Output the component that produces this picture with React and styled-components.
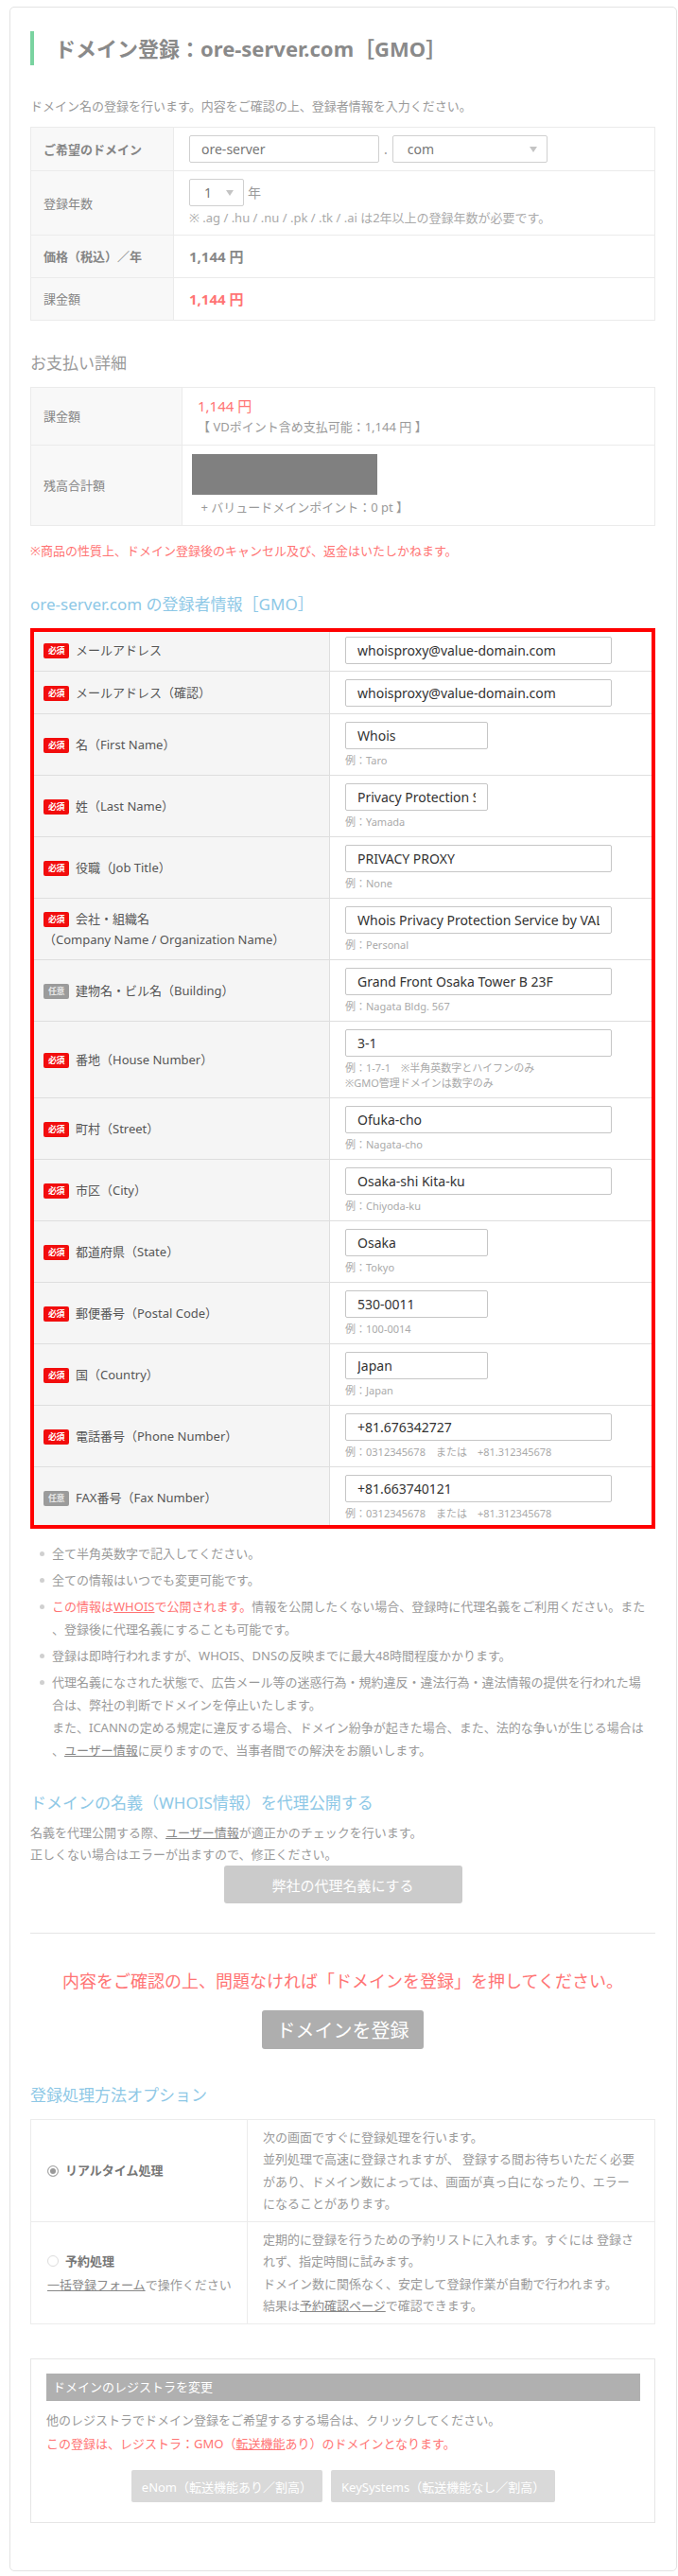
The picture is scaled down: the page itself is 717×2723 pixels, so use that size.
import React from 'react';
import styled, { createGlobalStyle } from 'styled-components';

const GlobalStyle = createGlobalStyle`
  html, body {
    margin: 0;
    padding: 0;
    background: #fff;
  }
  body {
    font-family: "Noto Sans", "Noto Sans CJK JP", sans-serif;
    font-size: 13px;
    line-height: 20px;
    color: #9a9a9a;
  }
  * {
    box-sizing: border-box;
  }
`;

const Card = styled.div`
  margin: 7px 1px 17px 10px;
  padding: 25px 22px 50px 21px;
  border: 1px solid #e3e3e3;
  border-radius: 5px;
  background: #fff;
`;

const Title = styled.h1`
  margin: 0;
  height: 36px;
  display: flex;
  align-items: center;
  padding-left: 22px;
  border-left: 4px solid #7ad3a0;
  font-size: 22px;
  font-weight: bold;
  color: #8a8a8a;
`;

const Intro = styled.p`
  margin: 33px 0 12px;
  line-height: 20px;
`;

const InfoTable = styled.table`
  width: 100%;
  border-collapse: collapse;
  border: 1px solid #ebebeb;
`;

const InfoLabel = styled.th`
  width: ${p => p.$w}px;
  padding: 0 13px;
  border: 1px solid #ebebeb;
  background: #f8f8f8;
  text-align: left;
  vertical-align: middle;
  font-weight: ${p => (p.$bold ? 'bold' : 'normal')};
  color: #858585;
`;

const InfoCell = styled.td`
  padding: ${p => p.$pad || '8px 16px'};
  border: 1px solid #ebebeb;
  vertical-align: middle;
`;

const InlineRow = styled.div`
  display: flex;
  align-items: center;
  gap: ${p => p.$gap || 5}px;
`;

const TextInput = styled.input`
  display: block;
  width: ${p => p.$w}px;
  height: 29px;
  padding: 0 12px;
  border: 1px solid #d0d0d0;
  border-radius: 2px;
  font-family: "Noto Sans", "Noto Sans CJK JP", sans-serif;
  font-size: 14px;
  color: #777;
  background: #fff;
  outline: none;
`;

const SelectBox = styled.div`
  width: ${p => p.$w}px;
  height: 29px;
  display: flex;
  align-items: center;
  justify-content: space-between;
  padding: 0 10px 0 15px;
  border: 1px solid #d0d0d0;
  border-radius: 2px;
  font-size: 14px;
  color: #777;
  background: #fff;
`;

const Caret = styled.span`
  width: 0;
  height: 0;
  border-left: 4px solid transparent;
  border-right: 4px solid transparent;
  border-top: 6px solid #c4c4c4;
`;

const Sep = styled.span`
  color: #999;
  font-size: 14px;
`;

const Note = styled.div`
  margin-top: 3px;
  line-height: 18px;
  color: #aaa;
`;

const Price = styled.div`
  font-size: 15px;
  line-height: ${p => p.$lh || 20}px;
  font-weight: ${p => (p.$bold ? 'bold' : 'normal')};
  color: ${p => (p.$red ? '#ff7474' : '#888')};
`;

const Line = styled.div`
  line-height: 22px;
  margin-top: ${p => p.$mt || 0}px;
`;

const Redacted = styled.div`
  width: 196px;
  height: 43px;
  margin-left: -6px;
  background: #808080;
`;

const SectionTitle = styled.h2`
  margin: ${p => p.$mt}px 0 ${p => p.$mb}px;
  font-size: 17px;
  font-weight: normal;
  line-height: 24px;
  color: ${p => (p.$blue ? '#8ec8e6' : '#9a9a9a')};
`;

const Warn = styled.p`
  margin: 16px 0 0;
  line-height: 20px;
  color: #ff7474;
`;

const FormFrame = styled.div`
  position: relative;
  &::after {
    content: '';
    position: absolute;
    inset: 0;
    border: 4px solid #ff0000;
    pointer-events: none;
  }
`;

const FormTable = styled.table`
  width: 100%;
  border-collapse: collapse;
`;

const FormLabel = styled.th`
  width: 316px;
  padding: 6px 8px 6px 13px;
  border: 1px solid #dedede;
  background: #f5f5f5;
  text-align: left;
  vertical-align: middle;
  font-weight: normal;
  font-size: 13px;
  line-height: 22px;
  color: #555;
`;

const FormCell = styled.td`
  padding: 8px 16px 7px;
  border: 1px solid #dedede;
  background: #fff;
  vertical-align: top;
`;

const Badge = styled.span`
  display: inline-block;
  width: 27px;
  height: 16px;
  margin-right: 7px;
  border-radius: 2px;
  background: ${p => (p.$optional ? '#9b9b9b' : '#f20d0d')};
  color: ${p => (p.$optional ? '#e8e8e8' : '#fff')};
  font-size: 9px;
  font-weight: bold;
  line-height: 16px;
  text-align: center;
  vertical-align: 1px;
  letter-spacing: -0.5px;
`;

const FieldInput = styled.input`
  display: block;
  width: ${p => (p.$short ? 151 : 282)}px;
  height: 29px;
  padding: 0 12px;
  border: 1px solid #c6c6c6;
  border-radius: 2px;
  font-family: "Noto Sans", "Noto Sans CJK JP", sans-serif;
  font-size: 14px;
  color: #333;
  background: #fff;
  outline: none;
`;

const Hints = styled.div`
  margin-top: 4px;
  font-size: 11px;
  line-height: 16px;
  color: #aaa;
`;

const Notes = styled.ul`
  margin: 14px 0 0;
  padding: 0;
  list-style: none;
`;

const NoteItem = styled.li`
  display: flex;
  margin-bottom: 4px;
  line-height: 24px;
`;

const Bullet = styled.span`
  flex: none;
  width: 5px;
  height: 5px;
  margin: 10px 8px 0 10px;
  border-radius: 50%;
  background: #d0d0d0;
`;

const Red = styled.span`
  color: #ff7474;
`;

const Link = styled.span`
  text-decoration: underline;
  color: ${p => (p.$red ? '#ff7474' : '#888')};
`;

const Lead = styled.p`
  margin: 0;
  line-height: 23px;
`;

const Center = styled.div`
  display: flex;
  justify-content: center;
  gap: 9px;
  margin-top: ${p => p.$mt || 0}px;
`;

const Button = styled.button`
  width: ${p => p.$w}px;
  height: ${p => p.$h}px;
  border: none;
  border-radius: 3px;
  background: ${p => p.$bg};
  color: #fff;
  font-family: "Noto Sans", "Noto Sans CJK JP", sans-serif;
  font-size: ${p => p.$fs}px;
  padding: 0;
`;

const Divider = styled.hr`
  margin: 31px 0 0;
  border: none;
  border-top: 1px solid #e5e5e5;
`;

const Confirm = styled.p`
  margin: 37px 0 0;
  text-align: center;
  font-size: 18px;
  line-height: 26px;
  color: #ff7474;
`;

const OptionTable = styled.table`
  width: 100%;
  border-collapse: collapse;
  border: 1px solid #ececec;
`;

const OptionLabel = styled.th`
  width: 229px;
  padding: 0 10px 0 17px;
  border: 1px solid #ececec;
  text-align: left;
  vertical-align: middle;
  font-weight: normal;
  line-height: 25px;
  color: #999;
`;

const OptionText = styled.td`
  padding: 7px 16px;
  border: 1px solid #ececec;
  line-height: 23.3px;
`;

const RadioRow = styled.div`
  display: flex;
  align-items: center;
  gap: 7px;
  font-weight: bold;
  color: #777;
`;

const Radio = styled.span`
  width: 12px;
  height: 12px;
  border-radius: 50%;
  border: 1px solid ${p => (p.$on ? '#aaa' : '#ddd')};
  background: ${p => (p.$on ? '#999' : '#fff')};
  box-shadow: inset 0 0 0 2px #fff;
`;

const RegistrarBox = styled.div`
  margin-top: 36px;
  padding: 15px 15px 21px 16px;
  border: 1px solid #e6e6e6;
`;

const RegistrarHead = styled.div`
  height: 29px;
  padding-left: 7px;
  background: #b0b0b0;
  color: #fff;
  line-height: 29px;
`;

const RegistrarText = styled.div`
  margin-top: 8px;
  line-height: 25px;
`;

const RegistrarButton = styled.button`
  height: 34px;
  padding: 0 11px;
  border: none;
  border-radius: 2px;
  background: #d9d9d9;
  color: #fff;
  font-family: "Noto Sans", "Noto Sans CJK JP", sans-serif;
  font-size: 13px;
`;

const phoneHint = '例：0312345678　または　+81.312345678';

const fields = [
  { label: 'メールアドレス', value: 'whoisproxy@value-domain.com' },
  { label: 'メールアドレス（確認）', value: 'whoisproxy@value-domain.com' },
  { label: '名（First Name）', value: 'Whois', short: true, hints: ['例：Taro'] },
  { label: '姓（Last Name）', value: 'Privacy Protection Service', short: true, hints: ['例：Yamada'] },
  { label: '役職（Job Title）', value: 'PRIVACY PROXY', hints: ['例：None'] },
  {
    label: '会社・組織名',
    sub: '（Company Name / Organization Name）',
    value: 'Whois Privacy Protection Service by VALUE-DOMAIN',
    hints: ['例：Personal'],
  },
  { label: '建物名・ビル名（Building）', optional: true, value: 'Grand Front Osaka Tower B 23F', hints: ['例：Nagata Bldg. 567'] },
  { label: '番地（House Number）', value: '3-1', hints: ['例：1-7-1　※半角英数字とハイフンのみ', '※GMO管理ドメインは数字のみ'] },
  { label: '町村（Street）', value: 'Ofuka-cho', hints: ['例：Nagata-cho'] },
  { label: '市区（City）', value: 'Osaka-shi Kita-ku', hints: ['例：Chiyoda-ku'] },
  { label: '都道府県（State）', value: 'Osaka', short: true, hints: ['例：Tokyo'] },
  { label: '郵便番号（Postal Code）', value: '530-0011', short: true, hints: ['例：100-0014'] },
  { label: '国（Country）', value: 'Japan', short: true, hints: ['例：Japan'] },
  { label: '電話番号（Phone Number）', value: '+81.676342727', hints: [phoneHint] },
  { label: 'FAX番号（Fax Number）', optional: true, value: '+81.663740121', hints: [phoneHint] },
];

function FieldRow({ field }) {
  return (
    <tr>
      <FormLabel>
        <Badge $optional={field.optional}>{field.optional ? '任意' : '必須'}</Badge>
        {field.label}
        {field.sub && <br />}
        {field.sub}
      </FormLabel>
      <FormCell>
        <FieldInput readOnly defaultValue={field.value} $short={field.short} />
        {field.hints && (
          <Hints>
            {field.hints.map(h => (
              <div key={h}>{h}</div>
            ))}
          </Hints>
        )}
      </FormCell>
    </tr>
  );
}

export default function App() {
  return (
    <>
      <GlobalStyle />
      <Card>
        <Title>ドメイン登録：ore-server.com［GMO］</Title>
        <Intro>ドメイン名の登録を行います。内容をご確認の上、登録者情報を入力ください。</Intro>

        <InfoTable>
          <tbody>
            <tr>
              <InfoLabel $w={151} $bold>ご希望のドメイン</InfoLabel>
              <InfoCell>
                <InlineRow>
                  <TextInput readOnly defaultValue="ore-server" $w={201} />
                  <Sep>.</Sep>
                  <SelectBox $w={164}>
                    com
                    <Caret />
                  </SelectBox>
                </InlineRow>
              </InfoCell>
            </tr>
            <tr>
              <InfoLabel $w={151}>登録年数</InfoLabel>
              <InfoCell $pad="8px 16px 9px">
                <InlineRow $gap={4}>
                  <SelectBox $w={58}>
                    1
                    <Caret />
                  </SelectBox>
                  <Sep>年</Sep>
                </InlineRow>
                <Note>※ .ag / .hu / .nu / .pk / .tk / .ai は2年以上の登録年数が必要です。</Note>
              </InfoCell>
            </tr>
            <tr>
              <InfoLabel $w={151} $bold>価格（税込）／年</InfoLabel>
              <InfoCell $pad="12px 16px">
                <Price $bold>1,144 円</Price>
              </InfoCell>
            </tr>
            <tr>
              <InfoLabel $w={151}>課金額</InfoLabel>
              <InfoCell $pad="12px 16px">
                <Price $bold $red>1,144 円</Price>
              </InfoCell>
            </tr>
          </tbody>
        </InfoTable>

        <SectionTitle $mt={33} $mb={13}>お支払い詳細</SectionTitle>
        <InfoTable>
          <tbody>
            <tr>
              <InfoLabel $w={160}>課金額</InfoLabel>
              <InfoCell>
                <Price $red $lh={22}>1,144 円</Price>
                <Line>【 VDポイント含め支払可能：1,144 円 】</Line>
              </InfoCell>
            </tr>
            <tr>
              <InfoLabel $w={160}>残高合計額</InfoLabel>
              <InfoCell $pad="9px 16px 8px">
                <Redacted />
                <Line $mt={2}>&nbsp;+ バリュードメインポイント：0 pt 】</Line>
              </InfoCell>
            </tr>
          </tbody>
        </InfoTable>

        <Warn>※商品の性質上、ドメイン登録後のキャンセル及び、返金はいたしかねます。</Warn>

        <SectionTitle $blue $mt={35} $mb={13}>ore-server.com の登録者情報［GMO］</SectionTitle>
        <FormFrame>
          <FormTable>
            <tbody>
              {fields.map(f => (
                <FieldRow key={f.label} field={f} />
              ))}
            </tbody>
          </FormTable>
        </FormFrame>

        <Notes>
          <NoteItem>
            <Bullet />
            <div>全て半角英数字で記入してください。</div>
          </NoteItem>
          <NoteItem>
            <Bullet />
            <div>全ての情報はいつでも変更可能です。</div>
          </NoteItem>
          <NoteItem>
            <Bullet />
            <div>
              <Red>
                この情報は<Link $red>WHOIS</Link>で公開されます。
              </Red>
              情報を公開したくない場合、登録時に代理名義をご利用ください。また
              <br />
              、登録後に代理名義にすることも可能です。
            </div>
          </NoteItem>
          <NoteItem>
            <Bullet />
            <div>登録は即時行われますが、WHOIS、DNSの反映までに最大48時間程度かかります。</div>
          </NoteItem>
          <NoteItem>
            <Bullet />
            <div>
              代理名義になされた状態で、広告メール等の迷惑行為・規約違反・違法行為・違法情報の提供を行われた場
              <br />
              合は、弊社の判断でドメインを停止いたします。
              <br />
              また、ICANNの定める規定に違反する場合、ドメイン紛争が起きた場合、また、法的な争いが生じる場合は
              <br />
              、<Link>ユーザー情報</Link>に戻りますので、当事者間での解決をお願いします。
            </div>
          </NoteItem>
        </Notes>

        <SectionTitle $blue $mt={32} $mb={8}>ドメインの名義（WHOIS情報）を代理公開する</SectionTitle>
        <Lead>
          名義を代理公開する際、<Link>ユーザー情報</Link>が適正かのチェックを行います。
          <br />
          正しくない場合はエラーが出ますので、修正ください。
        </Lead>
        <Center>
          <Button $w={252} $h={40} $bg="#cbcbcb" $fs={15}>弊社の代理名義にする</Button>
        </Center>

        <Divider />

        <Confirm>内容をご確認の上、問題なければ「ドメインを登録」を押してください。</Confirm>
        <Center $mt={18}>
          <Button $w={171} $h={41} $bg="#aeaeae" $fs={20}>ドメインを登録</Button>
        </Center>

        <SectionTitle $blue $mt={37} $mb={13}>登録処理方法オプション</SectionTitle>
        <OptionTable>
          <tbody>
            <tr>
              <OptionLabel>
                <RadioRow>
                  <Radio $on />
                  リアルタイム処理
                </RadioRow>
              </OptionLabel>
              <OptionText>
                次の画面ですぐに登録処理を行います。
                <br />
                並列処理で高速に登録されますが、 登録する間お待ちいただく必要があり、ドメイン数によっては、画面が真っ白になったり、エラーになることがあります。
              </OptionText>
            </tr>
            <tr>
              <OptionLabel>
                <RadioRow>
                  <Radio />
                  予約処理
                </RadioRow>
                <div>
                  <Link>一括登録フォーム</Link>で操作ください
                </div>
              </OptionLabel>
              <OptionText>
                定期的に登録を行うための予約リストに入れます。すぐには 登録されず、指定時間に試みます。
                <br />
                ドメイン数に関係なく、安定して登録作業が自動で行われます。
                <br />
                結果は<Link>予約確認ページ</Link>で確認できます。
              </OptionText>
            </tr>
          </tbody>
        </OptionTable>

        <RegistrarBox>
          <RegistrarHead>ドメインのレジストラを変更</RegistrarHead>
          <RegistrarText>
            他のレジストラでドメイン登録をご希望するする場合は、クリックしてください。
            <br />
            <Red>
              この登録は、レジストラ：GMO（<Link $red>転送機能</Link>あり）のドメインとなります。
            </Red>
          </RegistrarText>
          <Center $mt={15}>
            <RegistrarButton>eNom（転送機能あり／割高）</RegistrarButton>
            <RegistrarButton>KeySystems（転送機能なし／割高）</RegistrarButton>
          </Center>
        </RegistrarBox>
      </Card>
    </>
  );
}
